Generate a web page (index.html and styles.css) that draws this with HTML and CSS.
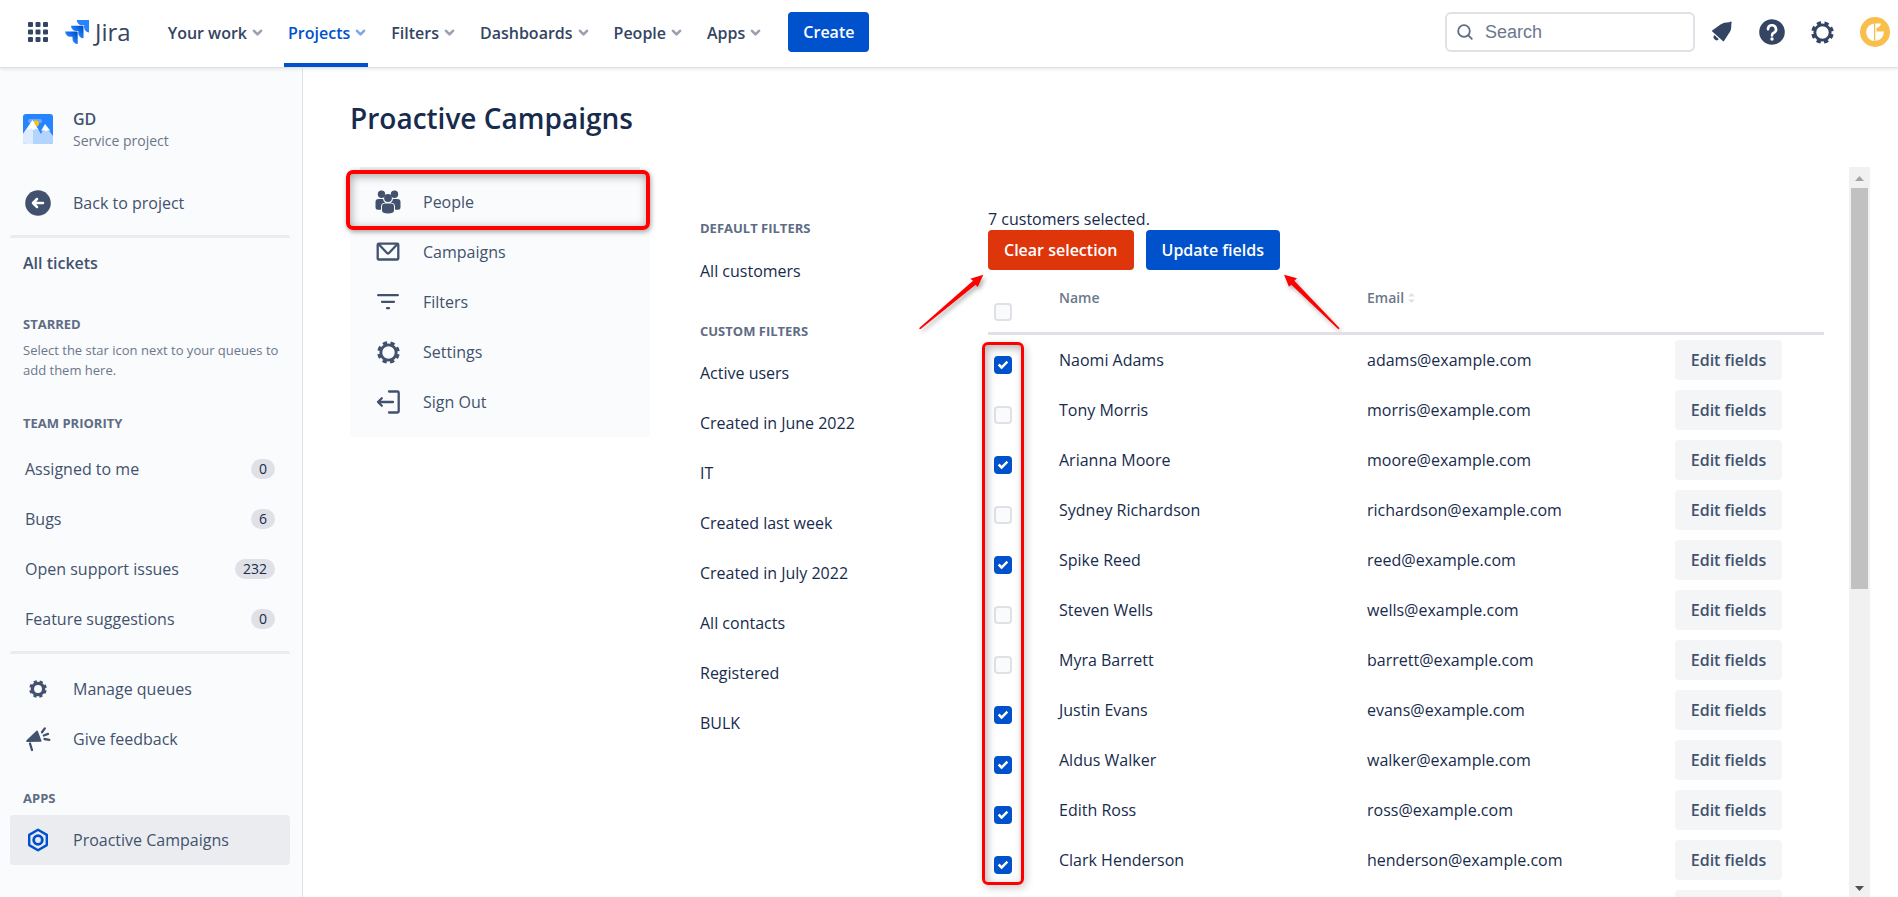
FILE: index.html
```html
<!DOCTYPE html>
<html lang="en">
<head>
<meta charset="utf-8">
<title>Proactive Campaigns - Jira</title>
<link rel="stylesheet" href="styles.css">
</head>
<body>
<svg class="defs" aria-hidden="true">
  <symbol id="chevron" viewBox="0 0 10 8"><path d="M1.500 1.800 5 5.400l3.500-3.600" fill="none" stroke="currentColor" stroke-width="2.600" stroke-linecap="round" stroke-linejoin="round"/></symbol>
  <symbol id="gear" viewBox="0 0 24 24"><g fill="none" stroke="currentColor"><circle cx="12" cy="12" r="8" stroke-width="3"/><circle cx="12" cy="12" r="10" stroke-width="3.500" stroke-dasharray="4.400 3.454" stroke-dashoffset="-1.730"/></g></symbol>
</svg>
<header class="topbar">
  <button class="icon-btn switcher" aria-label="Switch products">
    <svg width="20" height="20" viewBox="0 0 20 20" fill="currentColor"><rect width="5" height="5" rx="1"/><rect x="7.500" width="5" height="5" rx="1"/><rect x="15" width="5" height="5" rx="1"/><rect y="7.500" width="5" height="5" rx="1"/><rect x="7.500" y="7.500" width="5" height="5" rx="1"/><rect x="15" y="7.500" width="5" height="5" rx="1"/><rect y="15" width="5" height="5" rx="1"/><rect x="7.500" y="15" width="5" height="5" rx="1"/><rect x="15" y="15" width="5" height="5" rx="1"/></svg>
  </button>
  <a class="logo" href="#">
    <svg width="24" height="24" viewBox="0 0 24 24" aria-hidden="true">
      <defs>
        <linearGradient id="g1" x1="1" y1="0" x2="0.400" y2="0.600"><stop offset="0.200" stop-color="#0052cc"/><stop offset="1" stop-color="#2684ff"/></linearGradient>
      </defs>
      <path fill="#2684ff" d="M23.500 0H11.800a5.200 5.200 0 0 0 5.200 5.200h2.100v2.100a5.200 5.200 0 0 0 5.200 5.200V.8A.8.8 0 0 0 23.500 0z"/>
      <path fill="url(#g1)" d="M17.700 5.800H6a5.200 5.200 0 0 0 5.200 5.200h2.100v2.100a5.200 5.200 0 0 0 5.200 5.200V6.600a.8.8 0 0 0-.8-.8z"/>
      <path fill="url(#g1)" d="M11.900 11.600H.2a5.200 5.200 0 0 0 5.200 5.200h2.100v2.100a5.200 5.200 0 0 0 5.200 5.200V12.400a.8.8 0 0 0-.8-.8z"/>
    </svg>
    <span>Jira</span>
  </a>
  <nav class="menu" aria-label="Primary">
    <button class="menu-item">Your work <svg class="chev"><use href="#chevron"/></svg></button>
    <button class="menu-item active">Projects <svg class="chev"><use href="#chevron"/></svg></button>
    <button class="menu-item">Filters <svg class="chev"><use href="#chevron"/></svg></button>
    <button class="menu-item">Dashboards <svg class="chev"><use href="#chevron"/></svg></button>
    <button class="menu-item">People <svg class="chev"><use href="#chevron"/></svg></button>
    <button class="menu-item">Apps <svg class="chev"><use href="#chevron"/></svg></button>
  </nav>
  <button class="btn primary create">Create</button>
  <label class="search">
    <svg width="16" height="16" viewBox="0 0 16 16" fill="none" stroke="currentColor" stroke-width="1.800" stroke-linecap="round"><circle cx="7" cy="7" r="5.800"/><path d="m11.300 11.300 3.500 3.500"/></svg>
    <input type="text" placeholder="Search" aria-label="Search">
  </label>
  <div class="actions">
    <button class="icon-btn" aria-label="Notifications"><svg width="22" height="22" viewBox="0 0 22 22" fill="currentColor"><path d="M1 10.300Q.7 9.600 1.500 9.200L9.500 3.500Q12.500 1.300 18 1.200l2-.6q.7-.1.600.7l-.3 2.200q.4 5.500-2.500 9L13 20q-.6.800-1.200.1z"/><path d="m3.500 14 4.300 4.300a3 3 0 0 1-4.300-4.300z"/></svg></button>
    <button class="icon-btn" aria-label="Help"><svg width="26" height="26" viewBox="0 0 26 26"><circle cx="13" cy="13" r="12.800" fill="currentColor"/><path d="M9 10.300a4 4 0 1 1 5.800 3.500c-1.300.6-1.800 1.200-1.800 2.600" fill="none" stroke="#fff" stroke-width="2.600" stroke-linecap="round"/><circle cx="13" cy="20" r="1.700" fill="#fff"/></svg></button>
    <button class="icon-btn" aria-label="Settings"><svg width="23" height="23"><use href="#gear"/></svg></button>
    <button class="icon-btn" aria-label="Your profile"><svg width="30" height="30" viewBox="0 0 30 30"><circle cx="15" cy="15" r="15" fill="#f8bf4c"/><path fill="#fff" d="M14 6.500v17.500A8.800 8.800 0 0 1 14 6.500zM15.300 6.500h5.700q-1 4-4.500 4.500v3.500h7.500q-.4 8.500-8.700 9.500z"/></svg></button>
  </div>
</header>
<div class="body">
  <aside class="sidebar">
    <div class="project">
      <svg width="30" height="30" viewBox="0 0 30 30" aria-hidden="true">
        <clipPath id="pc"><rect width="30" height="30" rx="3"/></clipPath>
        <g clip-path="url(#pc)"><rect width="30" height="30" fill="#2684ff"/><rect x="5" y="5" width="14" height="4" rx="2" fill="#6aabff"/><circle cx="13" cy="9.500" r="3" fill="#ffc400"/><path d="M0 20 9.500 6 18 20l4-8.500L30 22v8H0z" fill="#b3d4ff"/><path d="M0 20 4 14h6v16H0z" fill="#deebff"/><path d="m4 14.500 5.500-8.500 6 10-2.500-1.500-2.500 1.500-2.500-2-2 2zM18 17l4-7 5.500 7-2.500-1-2 1.500-2-1.500z" fill="#fff"/></g>
      </svg>
      <div><div class="project-name">GD</div><div class="project-type">Service project</div></div>
    </div>
    <a class="side-link" href="#">
      <span class="side-icon"><svg width="26" height="26" viewBox="0 0 26 26"><circle cx="13" cy="13" r="12.800" fill="currentColor"/><path d="M18 13H8.500M12 9l-4 4 4 4" fill="none" stroke="#fff" stroke-width="2.500" stroke-linecap="round" stroke-linejoin="round"/></svg></span>Back to project
    </a>
    <hr>
    <a class="all-tickets" href="#">All tickets</a>
    <h2 class="starred">Starred</h2>
    <p class="hint">Select the star icon next to your queues to add them here.</p>
    <h2 class="team">Team priority</h2>
    <a class="queue" href="#">Assigned to me <span class="badge">0</span></a>
    <a class="queue" href="#">Bugs <span class="badge">6</span></a>
    <a class="queue" href="#">Open support issues <span class="badge">232</span></a>
    <a class="queue" href="#">Feature suggestions <span class="badge">0</span></a>
    <hr>
    <a class="side-link" href="#"><span class="side-icon"><svg width="18" height="18" viewBox="0 0 24 24" fill="none" stroke="currentColor"><circle cx="12" cy="12" r="7.500" stroke-width="4.500"/><circle cx="12" cy="12" r="10" stroke-width="3.500" stroke-dasharray="4.200 3.654" stroke-dashoffset="-1.830"/></svg></span>Manage queues</a>
    <a class="side-link" href="#"><span class="side-icon"><svg width="26" height="26" viewBox="0 0 26 26" fill="currentColor"><path d="M11.500 4.800q.8-.7 1.300.2l3.700 9.700q.3 1-.8 1.100L2 15.900Q.4 15.700 1.500 14.300z"/><path d="m5 17.500 2 6.500M17 6.200l2.800-3.800M18.800 9.500l4.200-1.600M19.500 13l4.800.8" fill="none" stroke="currentColor" stroke-width="2.300" stroke-linecap="round"/></svg></span>Give feedback</a>
    <h2 class="apps">Apps</h2>
    <a class="side-link selected" href="#"><span class="side-icon"><svg width="22" height="24" viewBox="0 0 22 24" fill="none" stroke="#0052cc" stroke-width="2.400" stroke-linejoin="round"><path d="m11 1.700 8.800 5.200v10.200L11 22.300l-8.800-5.200V6.900z"/><circle cx="11" cy="12" r="4.300" stroke-width="2.800"/></svg></span>Proactive Campaigns</a>
  </aside>
  <main class="main">
    <h1>Proactive Campaigns</h1>
    <div class="workspace">
      <nav class="sections" aria-label="Proactive Campaigns">
        <a class="section current" href="#"><span class="side-icon"><svg width="26" height="24" viewBox="0 0 26 24" fill="currentColor"><circle cx="6.500" cy="4.300" r="3.700"/><circle cx="19.500" cy="4.300" r="3.700"/><path d="M.5 12q0-3 3-3h4.500q.4 3 2.300 3.800-4.300.2-4.300 3.700v3.300H3q-2.500 0-2.500-2.500zM25.500 12q0-3-3-3H18q-.4 3-2.300 3.800 4.300.2 4.300 3.700v3.300h3q2.500 0 2.500-2.500z"/><circle cx="13" cy="8" r="3.900"/><path d="M7 16.500q0-3 3-3h6q3 0 3 3v4q0 3-6 3t-6-3z"/></svg></span>People</a>
        <a class="section" href="#"><span class="side-icon"><svg width="24" height="20" viewBox="0 0 24 20" fill="none" stroke="currentColor" stroke-width="2.300" stroke-linejoin="round"><rect x="1.700" y="1.700" width="20.600" height="15.800" rx="1"/><path d="m3 2.500 8 8.500q1 1 2 0l8-8.500"/></svg></span>Campaigns</a>
        <a class="section" href="#"><span class="side-icon"><svg width="22" height="18" viewBox="0 0 22 18" fill="none" stroke="currentColor" stroke-width="2.300" stroke-linecap="round"><path d="M1.200 2.200h19.600M5 8.800h12M10 15.200h2"/></svg></span>Filters</a>
        <a class="section" href="#"><span class="side-icon"><svg width="23" height="23"><use href="#gear"/></svg></span>Settings</a>
        <a class="section" href="#"><span class="side-icon"><svg width="24" height="24" viewBox="0 0 24 24" fill="none" stroke="currentColor" stroke-width="2.300" stroke-linecap="round" stroke-linejoin="round"><path d="M13 1.500h8.500q1.200 0 1.200 1.200v18.600q0 1.200-1.200 1.200H13M17 12H2M5.800 8.200 2 12l3.800 3.800"/></svg></span>Sign Out</a>
      </nav>
      <div class="filters">
        <h2>Default filters</h2>
        <a href="#">All customers</a>
        <h2>Custom filters</h2>
        <a href="#">Active users</a>
        <a href="#">Created in June 2022</a>
        <a href="#">IT</a>
        <a href="#">Created last week</a>
        <a href="#">Created in July 2022</a>
        <a href="#">All contacts</a>
        <a href="#">Registered</a>
        <a href="#">BULK</a>
      </div>
      <section class="people">
        <p class="status">7 customers selected.</p>
        <div class="toolbar">
          <button class="btn danger">Clear selection</button>
          <button class="btn primary">Update fields</button>
          <svg class="arrow arrow-clear" viewBox="50 250 210 180" aria-hidden="true"><path d="M249 255 210 267l8 6L56 416l4 3 166-134 6 7z"/></svg>
          <svg class="arrow arrow-update" viewBox="1140 250 189 180" aria-hidden="true"><path d="m1152 255 39 11-8 7 136 143-4 3-141-134-7 6z"/></svg>
        </div>
        <div class="table-wrap">
        <table>
          <colgroup><col class="c-check"><col><col><col class="c-action"></colgroup>
          <thead><tr><th><input type="checkbox" aria-label="Select all"></th><th>Name</th><th>Email <svg class="sort" width="7" height="10" viewBox="0 0 7 10" fill="#dfe1e6" aria-hidden="true"><path d="m0 3.500 3.500-3.500L7 3.500zM0 6.500h7L3.500 10z"/></svg></th><th></th></tr></thead>
          <tbody>
            <tr><td><input type="checkbox" aria-label="Naomi Adams" checked></td><td>Naomi Adams</td><td>adams@example.com</td><td><button class="btn subtle">Edit fields</button></td></tr>
            <tr><td><input type="checkbox" aria-label="Tony Morris"></td><td>Tony Morris</td><td>morris@example.com</td><td><button class="btn subtle">Edit fields</button></td></tr>
            <tr><td><input type="checkbox" aria-label="Arianna Moore" checked></td><td>Arianna Moore</td><td>moore@example.com</td><td><button class="btn subtle">Edit fields</button></td></tr>
            <tr><td><input type="checkbox" aria-label="Sydney Richardson"></td><td>Sydney Richardson</td><td>richardson@example.com</td><td><button class="btn subtle">Edit fields</button></td></tr>
            <tr><td><input type="checkbox" aria-label="Spike Reed" checked></td><td>Spike Reed</td><td>reed@example.com</td><td><button class="btn subtle">Edit fields</button></td></tr>
            <tr><td><input type="checkbox" aria-label="Steven Wells"></td><td>Steven Wells</td><td>wells@example.com</td><td><button class="btn subtle">Edit fields</button></td></tr>
            <tr><td><input type="checkbox" aria-label="Myra Barrett"></td><td>Myra Barrett</td><td>barrett@example.com</td><td><button class="btn subtle">Edit fields</button></td></tr>
            <tr><td><input type="checkbox" aria-label="Justin Evans" checked></td><td>Justin Evans</td><td>evans@example.com</td><td><button class="btn subtle">Edit fields</button></td></tr>
            <tr><td><input type="checkbox" aria-label="Aldus Walker" checked></td><td>Aldus Walker</td><td>walker@example.com</td><td><button class="btn subtle">Edit fields</button></td></tr>
            <tr><td><input type="checkbox" aria-label="Edith Ross" checked></td><td>Edith Ross</td><td>ross@example.com</td><td><button class="btn subtle">Edit fields</button></td></tr>
            <tr><td><input type="checkbox" aria-label="Clark Henderson" checked></td><td>Clark Henderson</td><td>henderson@example.com</td><td><button class="btn subtle">Edit fields</button></td></tr>
            <tr><td></td><td></td><td></td><td><button class="btn subtle" aria-label="Edit fields"></button></td></tr>
          </tbody>
        </table>
        <div class="check-frame"></div>
        </div>
      </section>
      <div class="scrollbar" aria-hidden="true">
        <svg width="9" height="5" viewBox="0 0 9 5"><path d="M0 5 4.500 0 9 5z" fill="#a3a3a3"/></svg>
        <div class="track"><div class="thumb"></div></div>
        <svg width="9" height="5" viewBox="0 0 9 5"><path d="M0 0h9L4.500 5z" fill="#505050"/></svg>
      </div>
    </div>
  </main>
</div>
</body>
</html>
```

FILE: styles.css
```css
*, ::before, ::after { box-sizing: border-box; }
body {
  margin: 0;
  height: 100vh;
  display: flex;
  flex-direction: column;
  overflow: hidden;
  background: #fff;
  color: #172b4d;
  font: 16px/20px "Open Sans", "Noto Sans", sans-serif;
}
a { color: inherit; text-decoration: none; }
button { font: inherit; color: inherit; border: 0; background: none; padding: 0; cursor: pointer; }
svg { display: block; flex: none; }
.defs { position: absolute; width: 0; height: 0; }
h1, h2, p { margin: 0; }
h2 { font-size: 13px; font-weight: 700; text-transform: uppercase; color: #5e6c84; }

/* Top bar */
.topbar {
  position: relative;
  z-index: 2;
  flex: none;
  height: 67px;
  display: flex;
  align-items: center;
  padding: 0 8px 3px 28px;
  background: #fff;
  color: #344563;
  box-shadow: 0 1px 1px #dfe1e6, 0 2px 4px rgba(9, 30, 66, .1);
}
.logo { display: flex; align-items: center; gap: 6px; margin-left: 17px; font: 24px/28px "Open Sans", sans-serif; }
.menu { display: flex; gap: 19px; margin-left: 33px; align-self: stretch; }
.menu-item {
  position: relative;
  display: flex;
  align-items: center;
  gap: 5px;
  height: 67px;
  padding: 0 2px 2px 4px;
  font-weight: 600;
}
.chev { width: 11px; height: 8px; opacity: .5; }
.menu-item.active { color: #0052cc; }
.menu-item.active::after {
  content: "";
  position: absolute;
  inset: auto 0 0;
  height: 4px;
  background: #0052cc;
}
.btn { height: 40px; padding: 0 15px; border-radius: 4px; font-weight: 600; white-space: nowrap; }
.primary { background: #0052cc; color: #fff; }
.danger { background: #de350b; color: #fff; }
.subtle { background: #f4f5f7; color: #42526e; width: 107px; display: block; }
.create { margin-left: 25px; }
.search {
  display: flex;
  align-items: center;
  gap: 12px;
  width: 250px;
  height: 40px;
  margin-left: auto;
  padding: 0 10px;
  border: 2px solid #dfe1e6;
  border-radius: 6px;
  color: #5e6c84;
}
.search input { flex: 1; min-width: 0; border: 0; padding: 0; outline: 0; background: none; font: 18px "Liberation Sans", Arial, sans-serif; }
.search input::placeholder { color: #6b778c; opacity: 1; }
.actions { display: flex; align-items: center; gap: 26px; margin-left: 16px; }

/* Project sidebar */
.body { flex: 1; min-height: 0; display: flex; }
.sidebar {
  flex: none;
  width: 303px;
  padding: 37px 12px 0 10px;
  background: #fafbfc;
  border-right: 1px solid #e1e3e7;
  color: #42526e;
}
.project { display: flex; align-items: center; gap: 20px; height: 50px; margin: 0 13px 24px; }
.project-name { font-weight: 600; line-height: 24px; }
.project-type { font-size: 14px; color: #6b778c; }
.side-link, .section { position: relative; display: flex; align-items: center; gap: 20px; height: 50px; padding-left: 23px; }
.side-icon { display: flex; justify-content: center; align-items: center; width: 30px; height: 26px; flex: none; }
.side-link { padding-left: 13px; }
.sidebar hr { height: 3px; margin: 7px 0 10px; border: 0; border-radius: 2px; background: #ebecf0; }
.all-tickets { display: block; padding: 4px 13px 40px; font-weight: 600; line-height: 22px; }
.starred, .team, .apps { padding-left: 13px; }
.starred, .hint { line-height: 20px; }
.hint { padding: 6px 0 0 13px; font-size: 13px; color: #6b778c; }
.team { margin: 33px 0 11px; }
.queue { display: flex; align-items: center; justify-content: space-between; height: 50px; padding: 0 15px; }
.badge { padding: 0 8px; border-radius: 10px; background: #dfe1e6; color: #172b4d; font-size: 14px; }
.apps { margin: 24px 0 7px; }
.selected { background: #ebecf0; border-radius: 4px; }

/* Main area */
.main { flex: 1; min-width: 0; display: flex; flex-direction: column; padding: 33px 28px 0 47px; }
h1 { font-size: 28px; line-height: 36px; font-weight: 600; margin-bottom: 31px; }
.workspace {
  flex: 1;
  min-height: 0;
  display: grid;
  grid-template-columns: 300px 238px 1fr 21px;
  grid-template-rows: minmax(0, 1fr);
  column-gap: 50px;
}
.sections {
  align-self: start;
  padding: 10px 0;
  background: linear-gradient(#ebecf0, #ebecf0) 10px 0 / calc(100% - 20px) 3px no-repeat #fafbfc;
  color: #42526e;
}
.current::after {
  content: "";
  position: absolute;
  inset: -7px 0 -3px -4px;
  border: 4px solid #f00;
  border-radius: 7px;
  box-shadow: 1px 2px 5px rgba(0, 0, 0, .35), inset 1px 2px 10px rgba(0, 0, 0, .35);
}
.filters { padding-top: 51px; }
.filters h2 { margin-bottom: 8px; }
.filters a + h2 { margin-top: 25px; margin-bottom: 7px; }
.filters a { display: block; line-height: 50px; }
.people { min-width: 0; padding-top: 41px; margin-right: -25px; }
.status { line-height: 22px; }
.toolbar { position: relative; display: flex; gap: 12px; }
.toolbar .btn { padding: 0 16px; }
.arrow { position: absolute; top: 43px; height: 60px; fill: #f00; filter: drop-shadow(2px 3px 2px rgba(0, 0, 0, .3)); overflow: visible; }
.arrow-clear { left: -71px; width: 70px; }
.arrow-update { left: 292px; width: 63px; }
.table-wrap { position: relative; }
table { width: 100%; table-layout: fixed; border-collapse: collapse; }
.c-check { width: 66px; }
.c-action { width: 154px; }
th { height: 63px; padding: 18px 5px 0; vertical-align: top; text-align: left; font-size: 14px; font-weight: 600; color: #6b778c; border-bottom: 3px solid #dfe1e6; }
td { height: 50px; padding: 5px; vertical-align: middle; }
.sort { display: inline-block; }
input[type="checkbox"] {
  appearance: none;
  display: block;
  position: relative;
  width: 18px;
  height: 18px;
  margin: 0 0 0 1px;
  border: 2px solid #dfe1e6;
  border-radius: 4px;
  background: #fafbfc;
}
th input[type="checkbox"] { margin-top: 15px; }
td:first-child { padding-top: 15px; }
input[type="checkbox"]:checked { background: #0052cc; border-color: #0052cc; }
input[type="checkbox"]:checked::after {
  content: "";
  position: absolute;
  left: 4px;
  top: 1px;
  width: 6px;
  height: 10px;
  border: solid #fff;
  border-width: 0 3px 3px 0;
  border-radius: 1px;
  transform: rotate(45deg);
}
.check-frame {
  position: absolute;
  top: 72px;
  left: -6px;
  width: 42px;
  height: 543px;
  border: 3px solid #f00;
  border-radius: 6px;
  box-shadow: 2px 3px 8px rgba(0, 0, 0, .2), inset 2px 3px 8px rgba(0, 0, 0, .3);
  pointer-events: none;
}
.scrollbar { display: flex; flex-direction: column; align-items: center; gap: 7px; padding: 9px 0 6px; background: #f1f1f1; }
.scrollbar .track { flex: 1; width: 17px; }
.thumb { height: 58%; background: #c1c1c1; }
```
